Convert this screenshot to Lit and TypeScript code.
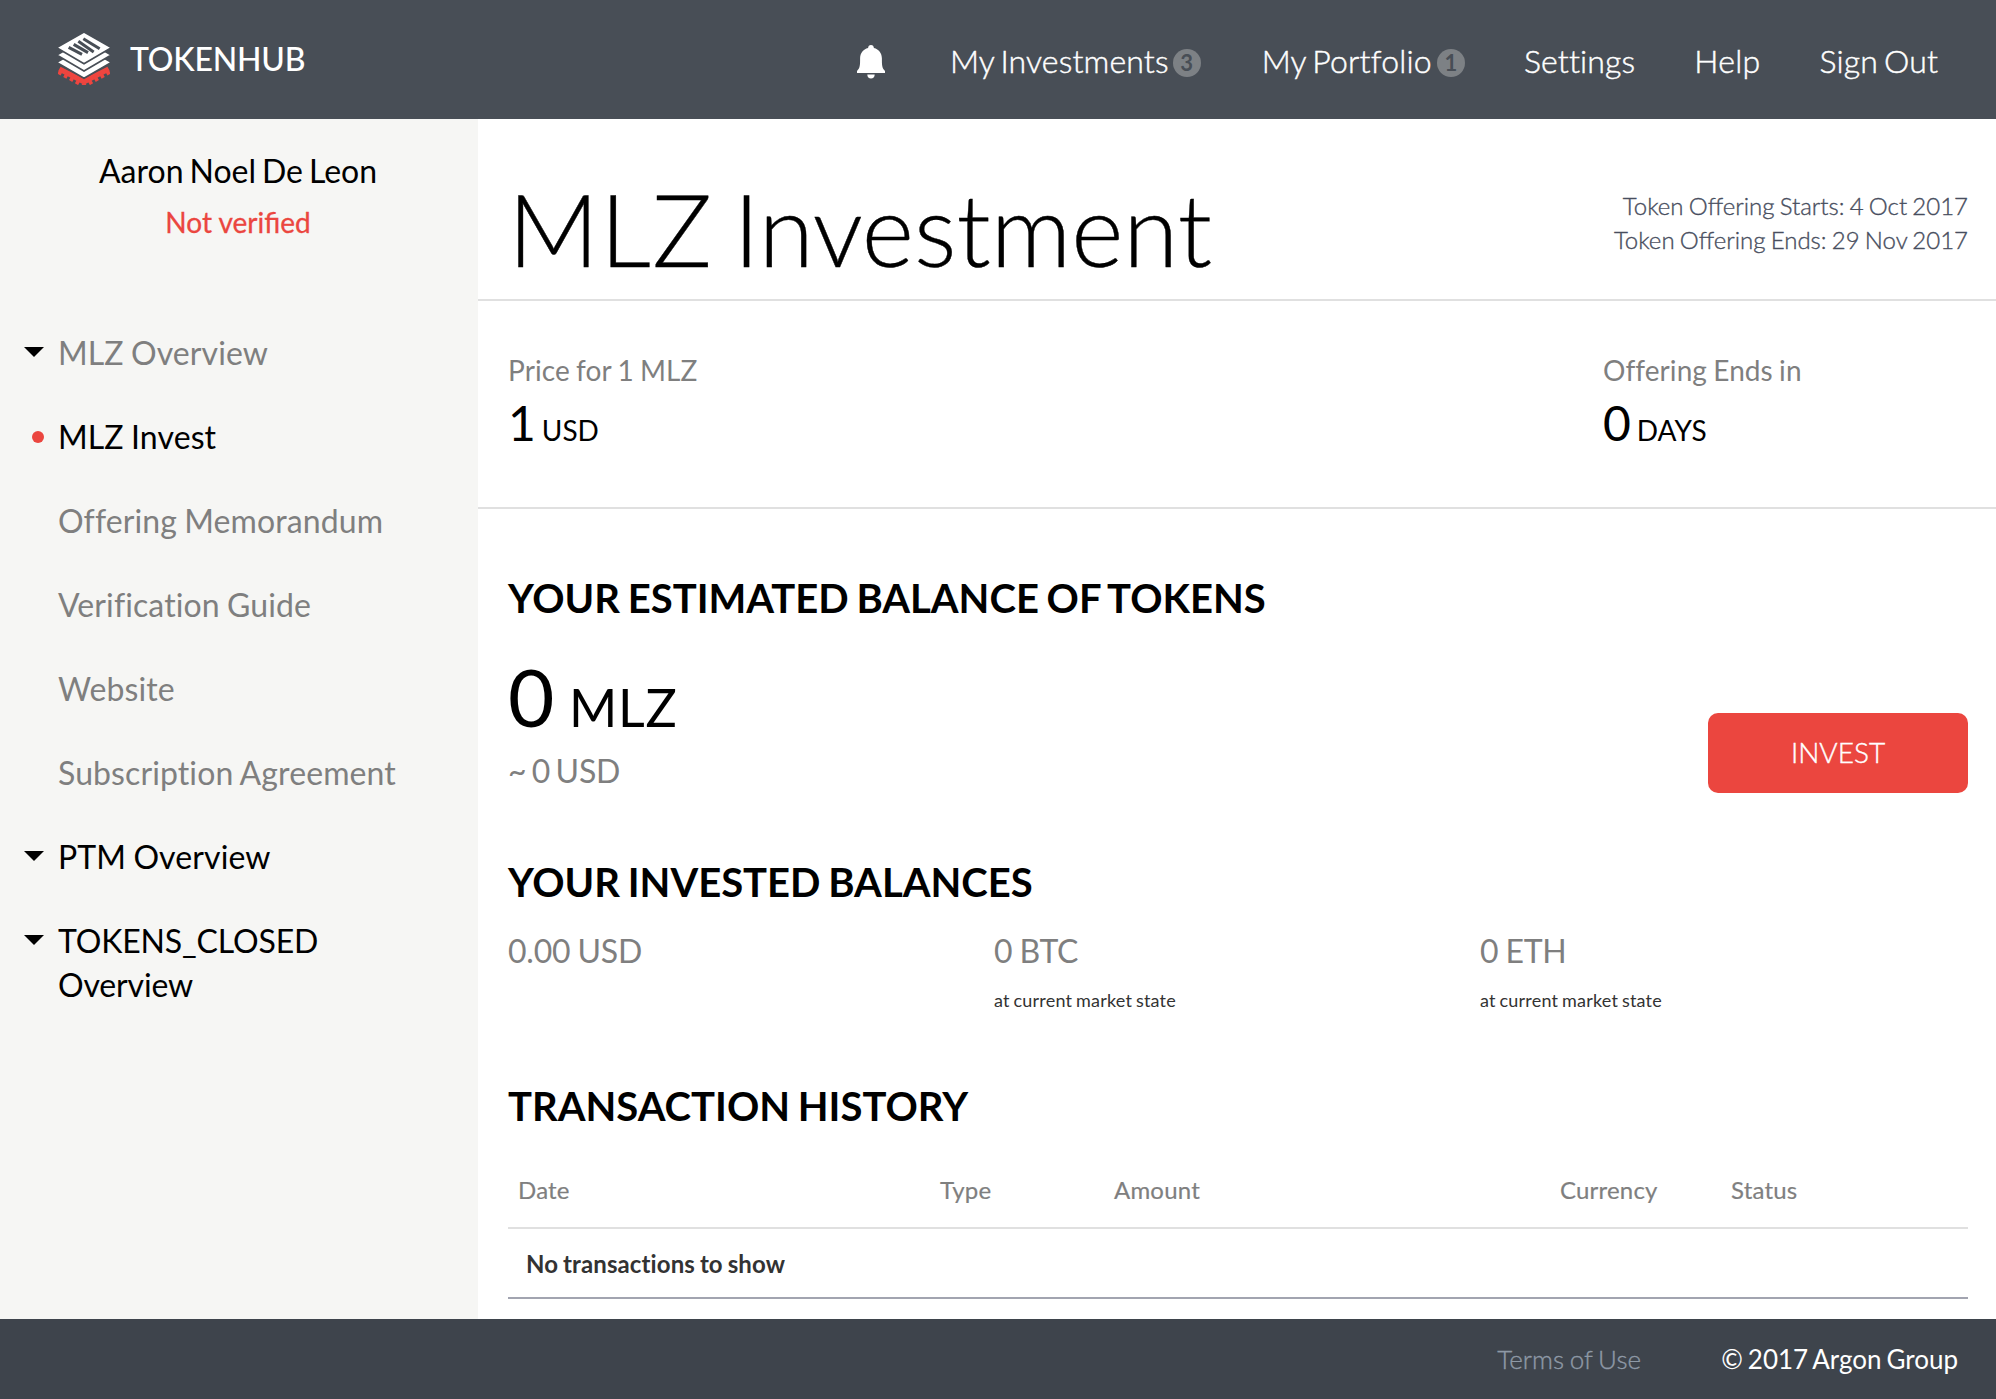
import { LitElement, html, css } from "lit";
import { customElement } from "lit/decorators.js";

const NAV = [
  { label: "My Investments", count: 3, cls: "n1" },
  { label: "My Portfolio", count: 1, cls: "n2" },
  { label: "Settings", cls: "n3" },
  { label: "Help", cls: "n4" },
  { label: "Sign Out", cls: "n5" },
];

const MENU = [
  { label: "MLZ Overview", mark: "arrow", tone: "muted" },
  { label: "MLZ Invest", mark: "dot", tone: "" },
  { label: "Offering Memorandum", mark: "", tone: "muted" },
  { label: "Verification Guide", mark: "", tone: "muted" },
  { label: "Website", mark: "", tone: "muted" },
  { label: "Subscription Agreement", mark: "", tone: "muted" },
  { label: "PTM Overview", mark: "arrow", tone: "" },
  { label: "TOKENS_CLOSED Overview", mark: "arrow", tone: "wrap" },
];

const BALANCES = [
  { amount: "0.00 USD", note: "" },
  { amount: "0 BTC", note: "at current market state" },
  { amount: "0 ETH", note: "at current market state" },
];

const COLUMNS = ["Date", "Type", "Amount", "Currency", "Status"];

@customElement("app-header")
class AppHeader extends LitElement {
  static styles = css`
    :host { display: block; }
    .bar { height: 119px; background: #484e56; display: flex; justify-content: space-between; box-sizing: border-box; padding: 0 58px; color: #fff; }
    .brand { display: flex; align-items: flex-start; padding-top: 33px; }
    .logo { display: block; width: 52px; height: 52px; }
    .name { font-size: 32px; line-height: 40px; margin: 6px 0 0 20px; font-weight: 500; letter-spacing: -0.2px; }
    .nav { display: flex; align-items: flex-start; }
    .bell { display: block; width: 28px; height: 34px; margin: 45px 65px 0 0; }
    .item { display: flex; margin-left: 59px; font-size: 32px; line-height: 40px; padding-top: 41px; font-weight: 300; white-space: nowrap; letter-spacing: 0.2px; word-spacing: -0.08em; -webkit-text-stroke: 0.45px #fff; }
    .n1 { margin-left: 0; letter-spacing: 0.14px; }
    .n2 { margin-left: 61px; }
    .n3 { letter-spacing: 0.15px; }
    .n4 { letter-spacing: 0.3px; }
    .n5 { letter-spacing: 0.1px; }
    .badge { width: 28px; height: 28px; border-radius: 50%; background: #7d8185; color: #484e56; font-size: 22px; line-height: 28px; font-weight: 700; text-align: center; margin: 8px 0 0 4px; letter-spacing: 0; -webkit-text-stroke: 0; }
    .n2 .badge { margin-left: 5px; }
  `;
  render() {
    return html`<header class="bar">
      <div class="brand">
        <svg class="logo" viewBox="0 0 156 156">
          <g fill="none" stroke="#ee453f">
            <path stroke-width="16" d="M4 108 L78 146 L152 108"/>
            <path stroke-width="16" stroke-dasharray="11 9" d="M2 115 L78 157"/>
            <path stroke-width="16" stroke-dasharray="11 9" d="M154 115 L78 157"/>
          </g>
          <g stroke="#484e56" stroke-width="5">
            <path fill="#fff" d="M-4 88 L78 41 L160 88 L78 136 Z"/>
            <path fill="#fff" d="M-4 66 L78 19 L160 66 L78 114 Z"/>
            <path fill="#fff" d="M-4 44 L78 -3 L160 44 L78 92 Z"/>
          </g>
          <g stroke="#484e56" stroke-width="9" fill="none">
            <path d="M76 17 L125 47"/><path d="M61 25 L107 57"/><path d="M47 34 L90 59"/><path d="M32 43 L72 64"/>
          </g>
        </svg>
        <span class="name">TOKENHUB</span>
      </div>
      <nav class="nav">
        <svg class="bell" viewBox="0 0 28 34"><path fill="#fff" d="M14 0c1.700 0 2.800 1.100 2.900 2.900 5 1.300 8 5.200 8 10.600 0 6.500 0 9.500 3.100 12.500v2H0v-2c3.100-3 3.100-6 3.100-12.500 0-5.400 3-9.300 8-10.600C11.200 1.100 12.300 0 14 0zM10.300 29.500h7.400c0 2.400-1.500 4.100-3.700 4.100s-3.700-1.700-3.700-4.100z"/></svg>
        ${NAV.map((n) => html`<a class="item ${n.cls}"><span>${n.label}</span>${n.count ? html`<span class="badge">${n.count}</span>` : ""}</a>`)}
      </nav>
    </header>`;
  }
}

@customElement("app-sidebar")
class AppSidebar extends LitElement {
  static styles = css`
    :host { display: block; width: 478px; flex: none; background: #f6f6f4; word-spacing: -0.06em; }
    .user { text-align: center; height: 212px; box-sizing: border-box; padding: 30px 2px 0 0; }
    .who { font-size: 32px; line-height: 44px; word-spacing: -0.07em; }
    .state { font-size: 28px; line-height: 40px; margin-top: 9px; color: #eb463f; -webkit-text-stroke: 0.3px; word-spacing: 0; }
    .row { display: flex; font-size: 32px; line-height: 44px; margin-bottom: 40px; }
    .mark { width: 58px; flex: none; }
    .text { width: 350px; white-space: nowrap; letter-spacing: 0.1px; }
    .wrap { width: 300px; white-space: normal; letter-spacing: -0.15px; }
    .muted { color: #7f7f7f; }
    .arrow { width: 0; height: 0; border: 10px solid transparent; border-top-color: #000; border-bottom: 0; margin: 16px 0 0 24px; }
    .dot { width: 12px; height: 12px; border-radius: 50%; background: #eb463f; margin: 16px 0 0 32px; }
  `;
  render() {
    return html`<div class="user"><div class="who">Aaron Noel De Leon</div><div class="state">Not verified</div></div>
      ${MENU.map((m) => html`<div class="row"><div class="mark">${m.mark ? html`<div class=${m.mark}></div>` : ""}</div>
        <div class="text ${m.tone}">${m.label}</div></div>`)}`;
  }
}

@customElement("app-main")
class AppMain extends LitElement {
  static styles = css`
    :host { display: block; flex: 1; min-width: 0; background: #fff; word-spacing: -0.06em; }
    .head { height: 182px; box-sizing: border-box; border-bottom: 2px solid #e0e0e0; display: flex; justify-content: space-between; padding: 0 28px 0 30px; }
    .title { font-size: 100px; line-height: 120px; font-weight: 300; margin: 49px 0 0; word-spacing: -7px; -webkit-text-stroke: 0.4px; }
    .code { letter-spacing: 1.400px; }
    .dates { font-size: 24px; line-height: 34px; font-weight: 300; text-align: right; color: #484e5e; padding-top: 70px; word-spacing: -0.055em; -webkit-text-stroke: 0.35px; }
    .price { height: 208px; box-sizing: border-box; border-bottom: 2px solid #e0e0e0; display: flex; padding: 49px 0 0 30px; }
    .cell { width: 1095px; flex: none; }
    .label { font-size: 28px; line-height: 40px; color: #7f7f7f; letter-spacing: 0.08px; }
    .value { font-size: 48px; line-height: 60px; margin-top: 3px; }
    .unit { font-size: 28px; line-height: 1; white-space: pre; word-spacing: -1.200px; }
    .body { padding: 0 28px 0 30px; }
    .h { font-size: 40px; line-height: 48px; font-weight: 700; margin: 0; word-spacing: -0.05em; }
    .est { display: flex; justify-content: space-between; }
    .h1 { padding-top: 65px; }
    .big { font-size: 80px; line-height: 96px; margin-top: 26px; word-spacing: -6px; }
    .big .unit { font-size: 52px; letter-spacing: 0.800px; }
    .sub { font-size: 32px; line-height: 40px; color: #7f7f7f; letter-spacing: -0.2px; }
    .approx { margin-top: 7px; word-spacing: -0.08em; }
    .btn { width: 260px; height: 80px; margin-top: 204px; border: 0; border-radius: 10px; background: #eb463f; color: #fff; font: 300 28px/78px Lato, sans-serif; padding: 0 0 2px; -webkit-text-stroke: 0.4px #fff; }
    .h2 { margin-top: 65px; }
    .cols { display: grid; grid-template-columns: repeat(3, 486px); height: 117px; padding-top: 25px; margin-bottom: 59px; box-sizing: border-box; }
    .note { font-size: 18px; line-height: 24px; margin-top: 17px; color: #333; letter-spacing: 0.2px; }
    .thead { display: grid; grid-template-columns: 422px 174px 446px 171px 1fr; padding-left: 10px; margin-top: 45px; height: 52px; border-bottom: 2px solid #e0e0e0; font-size: 24px; line-height: 30px; color: #7f7f7f; letter-spacing: 0.2px; -webkit-text-stroke: 0.2px; }
    .empty { height: 68px; line-height: 69px; padding-left: 18px; font-size: 24px; font-weight: 700; color: #333; border-bottom: 2px solid #a2a4b0; letter-spacing: 0.1px; }
  `;
  render() {
    return html`
      <div class="head"><h1 class="title"><span class="code">MLZ</span> Investment</h1>
        <div class="dates"><div>Token Offering Starts: 4 Oct 2017</div><div>Token Offering Ends: 29 Nov 2017</div></div></div>
      <div class="price">
        <div class="cell"><div class="label">Price for 1 MLZ</div><div class="value">1<span class="unit"> USD</span></div></div>
        <div><div class="label">Offering Ends in</div><div class="value">0<span class="unit"> DAYS</span></div></div>
      </div>
      <div class="body">
        <div class="est"><div><h2 class="h h1">YOUR ESTIMATED BALANCE OF TOKENS</h2>
          <div class="big">0 <span class="unit">MLZ</span></div><div class="sub approx">~ 0 USD</div></div>
          <button class="btn">INVEST</button></div>
        <h2 class="h h2">YOUR INVESTED BALANCES</h2>
        <div class="cols">${BALANCES.map((b) => html`<div><div class="sub">${b.amount}</div><div class="note">${b.note}</div></div>`)}</div>
        <h2 class="h h3">TRANSACTION HISTORY</h2>
        <div class="thead">${COLUMNS.map((c) => html`<span>${c}</span>`)}</div>
        <div class="empty">No transactions to show</div>
      </div>`;
  }
}

@customElement("app-root")
class AppRoot extends LitElement {
  static styles = css`
    :host { display: block; width: 1996px; height: 1399px; overflow: hidden; font-family: Lato, sans-serif; color: #000; }
    .mid { display: flex; height: 1200px; }
    .foot { height: 80px; background: #3e444c; display: flex; justify-content: flex-end; gap: 80px; padding-right: 38px; box-sizing: border-box; font-size: 26px; line-height: 80px; color: #fff; word-spacing: -0.065em; }
    .terms { color: #8e99a6; font-weight: 300; letter-spacing: 0.1px; -webkit-text-stroke: 0.35px; }
  `;
  render() {
    return html`<app-header></app-header><div class="mid"><app-sidebar></app-sidebar><app-main></app-main></div>
      <footer class="foot"><span class="terms">Terms of Use</span><span>© 2017 Argon Group</span></footer>`;
  }
}
